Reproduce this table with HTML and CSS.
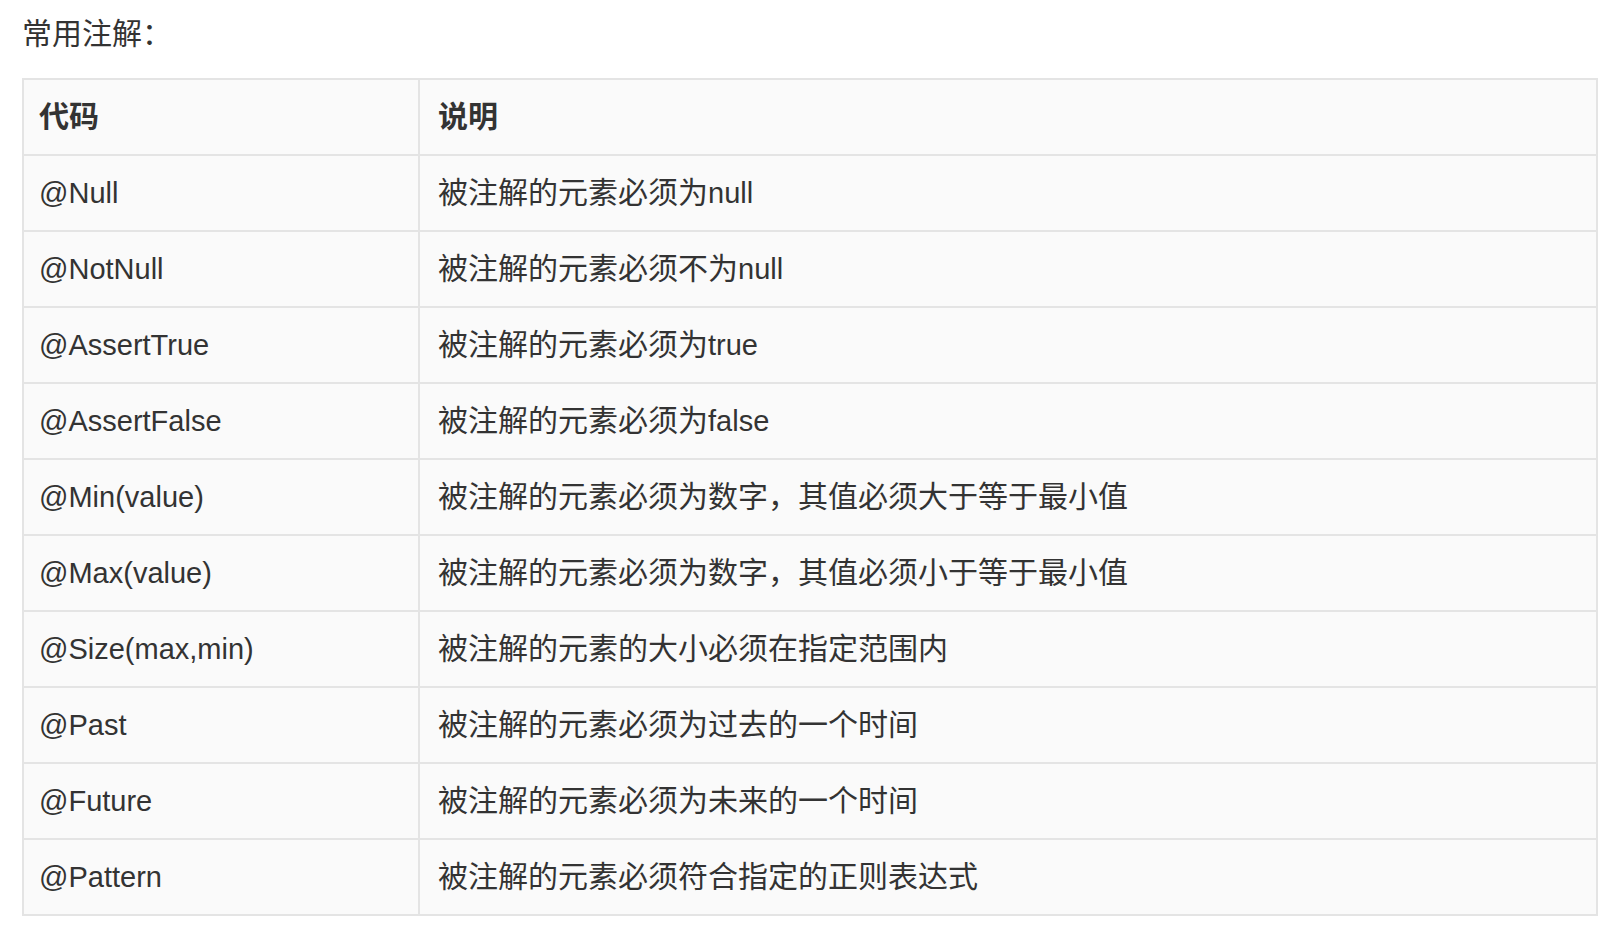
FILE: index.html
```html
<!DOCTYPE html>
<html lang="zh-CN">
<head>
<meta charset="utf-8">
<title>常用注解</title>
<link rel="stylesheet" href="styles.css">
</head>
<body>
<p class="title">常用注解：</p>
<table class="anno">
  <colgroup><col class="c1"><col class="c2"></colgroup>
  <thead>
    <tr><th>代码</th><th>说明</th></tr>
  </thead>
  <tbody>
    <tr><td class="code">@Null</td><td>被注解的元素必须为<span class="en">null</span></td></tr>
    <tr><td class="code">@NotNull</td><td>被注解的元素必须不为<span class="en">null</span></td></tr>
    <tr><td class="code">@AssertTrue</td><td>被注解的元素必须为<span class="en">true</span></td></tr>
    <tr><td class="code">@AssertFalse</td><td>被注解的元素必须为<span class="en">false</span></td></tr>
    <tr><td class="code">@Min(value)</td><td>被注解的元素必须为数字，其值必须大于等于最小值</td></tr>
    <tr><td class="code">@Max(value)</td><td>被注解的元素必须为数字，其值必须小于等于最小值</td></tr>
    <tr><td class="code">@Size(max,min)</td><td>被注解的元素的大小必须在指定范围内</td></tr>
    <tr><td class="code">@Past</td><td>被注解的元素必须为过去的一个时间</td></tr>
    <tr><td class="code">@Future</td><td>被注解的元素必须为未来的一个时间</td></tr>
    <tr><td class="code">@Pattern</td><td>被注解的元素必须符合指定的正则表达式</td></tr>
  </tbody>
</table>
</body>
</html>
```
FILE: styles.css
```css
html, body {
  margin: 0;
  padding: 0;
  background: #ffffff;
}
body {
  padding: 14px 18px 0 22px;
  font-family: "Liberation Sans", "Noto Sans CJK SC", sans-serif;
  font-size: 30px;
  color: #333333;
}
.title {
  margin: 0 0 24px 0;
  line-height: 40px;
}
.anno {
  width: 1576px;
  border-collapse: collapse;
  background: #fafafa;
}
.c1 { width: 396px; }
.anno th,
.anno td {
  border: 2px solid #e4e4e4;
  padding: 0 15px;
  line-height: 74px;
  text-align: left;
  white-space: nowrap;
}
.anno td + td,
.anno th + th {
  padding-left: 18px;
}
.anno th {
  font-weight: bold;
}
.anno .code,
.anno .en {
  font-size: 29px;
}
```
